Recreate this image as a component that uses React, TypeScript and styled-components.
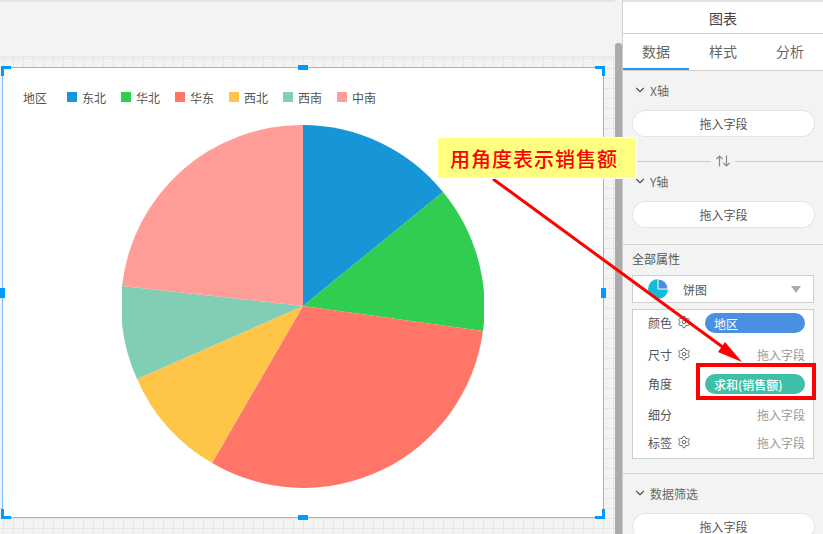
import React from 'react';
import styled, { createGlobalStyle } from 'styled-components';
import { ChevronDown, Settings } from 'lucide-react';

const GlobalStyle = createGlobalStyle`
  html, body {
    margin: 0;
    width: 823px;
    height: 534px;
    overflow: hidden;
    background: #f3f3f3;
    font-family: "Noto Sans CJK SC", "Liberation Sans", sans-serif;
  }
  * { box-sizing: border-box; }
`;

const legendItems = [
  { name: '东北', color: '#1696d6' },
  { name: '华北', color: '#30cd50' },
  { name: '华东', color: '#ff7668' },
  { name: '西北', color: '#ffc548' },
  { name: '西南', color: '#82cdb6' },
  { name: '中南', color: '#ff9e99' },
];

const cx = 181;
const cy = 181;
const r = 181;
// slice end points, read off the reference relative to the pie centre
const slicePoints: [number, number][] = [
  [0, -181],
  [140, -114],
  [180, 25],
  [-91, 157],
  [-166, 73],
  [-181, -20],
  [0, -181],
];

function Pie() {
  return (
    <PieSvg viewBox="0 0 362 364">
      {legendItems.map((item, i) => {
        const [x1, y1] = slicePoints[i];
        const [x2, y2] = slicePoints[i + 1];
        return (
          <path
            key={item.name}
            fill={item.color}
            d={`M${cx} ${cy}L${cx + x1} ${cy + y1}A${r} ${r} 0 0 1 ${cx + x2} ${cy + y2}Z`}
          />
        );
      })}
    </PieSvg>
  );
}

function Section({ title, children }: { title: string; children?: React.ReactNode }) {
  return (
    <>
      <SectionTitle>
        <ChevronDown size={14} strokeWidth={2} color="#555" />
        <span>{title}</span>
      </SectionTitle>
      {children}
    </>
  );
}

function Gear() {
  return <Settings size={14} strokeWidth={1.5} color="#555" />;
}

export default function App() {
  return (
    <Page>
      <GlobalStyle />
      <Workspace>
        <TopBand />
        <Canvas>
          <Widget>
            <Legend>
              <LegendTitle>地区</LegendTitle>
              {legendItems.map((item) => (
                <LegendItem key={item.name}>
                  <Swatch $color={item.color} />
                  {item.name}
                </LegendItem>
              ))}
            </Legend>
            <Pie />
            <Corner $v="top" $h="left" />
            <Corner $v="top" $h="right" />
            <Corner $v="bottom" $h="left" />
            <Corner $v="bottom" $h="right" />
            <HandleTop />
            <HandleBottom />
            <HandleLeft />
            <HandleRight />
          </Widget>
        </Canvas>
        <Scrollbar />
      </Workspace>

      <Panel>
        <PanelHeader>图表</PanelHeader>
        <Tabs>
          <Tab $active>数据</Tab>
          <Tab>样式</Tab>
          <Tab>分析</Tab>
        </Tabs>
        <AxisBlock>
          <Section title="X轴">
            <DropPill>拖入字段</DropPill>
          </Section>
          <SwapRow>
            <svg width="24" height="12" viewBox="0 0 24 12" fill="none" stroke="#888" strokeWidth="1.2">
              <path d="M8.500 11.500V1M5.500 4L8.500 1L11.500 4" />
              <path d="M15.500 .5V11M12.500 8L15.500 11L18.500 8" />
            </svg>
          </SwapRow>
          <Section title="Y轴">
            <DropPill>拖入字段</DropPill>
          </Section>
        </AxisBlock>
        <PropsBlock>
          <PropsTitle>全部属性</PropsTitle>
          <ChartSelect>
            <svg width="20" height="20" viewBox="0 0 20 20">
              <circle cx="10" cy="10" r="10" fill="#12bcd8" />
              <path d="M10 0A10 10 0 0 1 20 10H10Z" fill="#4a90e2" stroke="#fff" strokeWidth="1" />
            </svg>
            <ChartName>饼图</ChartName>
            <Caret />
          </ChartSelect>
          <FieldBox>
            <FieldRow $mt={0}>
              <FieldLabel>颜色<Gear /></FieldLabel>
              <FieldPill $color="#4a90e2">地区</FieldPill>
            </FieldRow>
            <FieldRow $mt={12}>
              <FieldLabel>尺寸<Gear /></FieldLabel>
              <FieldHint>拖入字段</FieldHint>
            </FieldRow>
            <FieldRow $mt={9}>
              <FieldLabel>角度</FieldLabel>
              <FieldPill $color="#3fbfa6" $bold>求和(销售额)</FieldPill>
            </FieldRow>
            <FieldRow $mt={11}>
              <FieldLabel>细分</FieldLabel>
              <FieldHint>拖入字段</FieldHint>
            </FieldRow>
            <FieldRow $mt={8}>
              <FieldLabel>标签<Gear /></FieldLabel>
              <FieldHint>拖入字段</FieldHint>
            </FieldRow>
          </FieldBox>
        </PropsBlock>
        <FilterBlock>
          <Section title="数据筛选">
            <DropPill>拖入字段</DropPill>
          </Section>
        </FilterBlock>
      </Panel>

      <ArrowLayer viewBox="0 0 823 534">
        <path d="M493 179L724 348" stroke="#f00" strokeWidth="3" fill="none" />
        <path d="M742 362L718 352L725 342Z" fill="#f00" />
      </ArrowLayer>
      <Callout>用角度表示销售额</Callout>
      <RedFrame />
    </Page>
  );
}

const Page = styled.div`
  position: relative;
  display: flex;
  width: 823px;
  height: 534px;
  overflow: hidden;
  background: #f3f3f3;
`;

const Workspace = styled.div`
  position: relative;
  display: flex;
  flex-direction: column;
  width: 622px;
  height: 100%;
  padding-right: 7px;
`;

const TopBand = styled.div`
  height: 57px;
  border-top: 2px solid #e4e4e4;
  border-bottom: 1px solid #e8e8e8;
  background: #f3f3f3;
`;

const Canvas = styled.div`
  position: relative;
  flex: 1;
  background-color: #f3f3f3;
  background-image: linear-gradient(to right, #e6e6e6 1px, transparent 1px),
    linear-gradient(to bottom, #e6e6e6 1px, transparent 1px);
  background-size: 10px 10px;
  background-position: 3px 1px;
`;

const Scrollbar = styled.div`
  position: absolute;
  top: 43px;
  right: 0;
  bottom: 0;
  width: 7px;
  border-radius: 3px 3px 0 0;
  background: #ababab;
`;

const Widget = styled.div`
  position: absolute;
  top: 10px;
  left: 2px;
  display: flex;
  flex-direction: column;
  align-items: center;
  width: 602px;
  height: 451px;
  border: 1px solid #7cbcf8;
  background: #fff;
`;

const Legend = styled.div`
  display: flex;
  align-items: center;
  align-self: flex-start;
  height: 18px;
  margin-top: 20px;
  padding-left: 20px;
  font-size: 12px;
  color: #555;
`;

const LegendTitle = styled.span`
  width: 44px;
`;

const LegendItem = styled.span`
  display: flex;
  align-items: center;
  gap: 5px;
  width: 54px;
`;

const Swatch = styled.i<{ $color: string }>`
  width: 10px;
  height: 10px;
  background: ${(p) => p.$color};
`;

const PieSvg = styled.svg`
  flex: none;
  width: 362px;
  height: 364px;
  margin-top: 19px;
`;

const Corner = styled.i<{ $v: 'top' | 'bottom'; $h: 'left' | 'right' }>`
  position: absolute;
  ${(p) => p.$v}: -2px;
  ${(p) => p.$h}: -2px;
  width: 10px;
  height: 10px;
  border-style: solid;
  border-color: #0099ff;
  border-width: 0;
  border-${(p) => p.$v}-width: 3px;
  border-${(p) => p.$h}-width: 3px;
`;

const HandleTop = styled.i`
  position: absolute;
  top: -3px;
  left: 295px;
  width: 10px;
  height: 5px;
  background: #0099ff;
`;

const HandleBottom = styled(HandleTop)`
  top: auto;
  bottom: -3px;
`;

const HandleLeft = styled.i`
  position: absolute;
  top: 220px;
  left: -3px;
  width: 5px;
  height: 10px;
  background: #0099ff;
`;

const HandleRight = styled(HandleLeft)`
  left: auto;
  right: -3px;
`;

const Panel = styled.aside`
  display: flex;
  flex-direction: column;
  width: 201px;
  height: 100%;
  overflow: hidden;
  border-left: 1px solid #cfcfcf;
  background: #f3f3f3;
  color: #555;
  font-size: 12px;
`;

const PanelHeader = styled.div`
  flex: none;
  display: flex;
  align-items: center;
  justify-content: center;
  height: 34px;
  border-top: 2px solid #e4e4e4;
  border-bottom: 1px solid #cfcfcf;
  background: #fff;
  color: #444;
  font-size: 14px;
`;

const Tabs = styled.div`
  flex: none;
  display: grid;
  grid-template-columns: 66px 68px 66px;
  height: 37px;
  border-bottom: 1px solid #cfcfcf;
  background: #fff;
`;

const Tab = styled.div<{ $active?: boolean }>`
  display: flex;
  align-items: center;
  justify-content: center;
  height: 36px;
  border-bottom: 2px solid ${(p) => (p.$active ? '#2b94ec' : 'transparent')};
  color: #666;
  font-size: 14px;
`;

const AxisBlock = styled.div`
  flex: none;
  height: 174px;
  padding-top: 9px;
  border-bottom: 1px solid #d4d4d4;
`;

const SectionTitle = styled.div`
  display: flex;
  align-items: center;
  gap: 3px;
  height: 20px;
  padding-left: 10px;
  color: #666;
  font-size: 12px;
`;

const DropPill = styled.div`
  display: flex;
  align-items: center;
  justify-content: center;
  width: 183px;
  height: 27px;
  margin: 10px 0 0 9px;
  border: 1px dotted #c8c8c8;
  border-radius: 14px;
  background: #fff;
  color: #555;
  font-size: 12px;
`;

const SwapRow = styled.div`
  display: flex;
  align-items: center;
  justify-content: center;
  height: 24px;
  margin: 12px 0 -2px;
  background: linear-gradient(#ccc, #ccc) left 12px / 100% 1px no-repeat;

  svg {
    background: #f3f3f3;
  }
`;

const PropsBlock = styled.div`
  flex: none;
  height: 229px;
  padding: 4px 9px 0;
  border-bottom: 1px solid #d4d4d4;
`;

const PropsTitle = styled.div`
  display: flex;
  align-items: center;
  height: 18px;
  color: #555;
`;

const ChartSelect = styled.div`
  display: flex;
  align-items: center;
  height: 28px;
  margin-top: 8px;
  padding: 0 9px 0 15px;
  border: 1px solid #cfcfcf;
  background: #fff;
`;

const ChartName = styled.span`
  flex: 1;
  margin-left: 15px;
`;

const Caret = styled.i`
  width: 0;
  height: 0;
  border-left: 5px solid transparent;
  border-right: 5px solid transparent;
  border-top: 7px solid #aaa;
  margin-right: 3px;
`;

const FieldBox = styled.div`
  display: flex;
  flex-direction: column;
  height: 150px;
  margin-top: 6px;
  padding: 3px 8px 0 15px;
  border: 1px solid #cfcfcf;
  background: #fff;
`;

const FieldRow = styled.div<{ $mt: number }>`
  display: flex;
  align-items: center;
  justify-content: space-between;
  height: 20px;
  margin-top: ${(p) => p.$mt}px;
`;

const FieldLabel = styled.span`
  display: flex;
  align-items: center;
  gap: 5px;
  padding-bottom: 2px;
  color: #555;
`;

const FieldPill = styled.span<{ $color: string; $bold?: boolean }>`
  display: flex;
  align-items: center;
  width: 100px;
  height: 20px;
  padding-left: 9px;
  border-radius: 10px;
  background: ${(p) => p.$color};
  color: #fff;
  font-size: 12px;
  font-weight: ${(p) => (p.$bold ? 500 : 400)};
`;

const FieldHint = styled.span`
  padding-bottom: 1px;
  color: #999;
`;

const FilterBlock = styled.div`
  flex: none;
  padding-top: 9px;
`;

const ArrowLayer = styled.svg`
  position: absolute;
  inset: 0;
  width: 823px;
  height: 534px;
  pointer-events: none;
`;

const Callout = styled.div`
  position: absolute;
  top: 137px;
  left: 437px;
  display: flex;
  align-items: center;
  width: 200px;
  height: 42px;
  padding-left: 12px;
  border: 1px solid #fff;
  background: #ffff80;
  color: #f00;
  font-family: "Noto Sans CJK SC", serif;
  font-size: 20px;
  font-weight: 500;
  letter-spacing: 1px;
  white-space: nowrap;
`;

const RedFrame = styled.div`
  position: absolute;
  top: 363px;
  left: 696px;
  width: 120px;
  height: 37px;
  border: 4px solid #f00;
`;
